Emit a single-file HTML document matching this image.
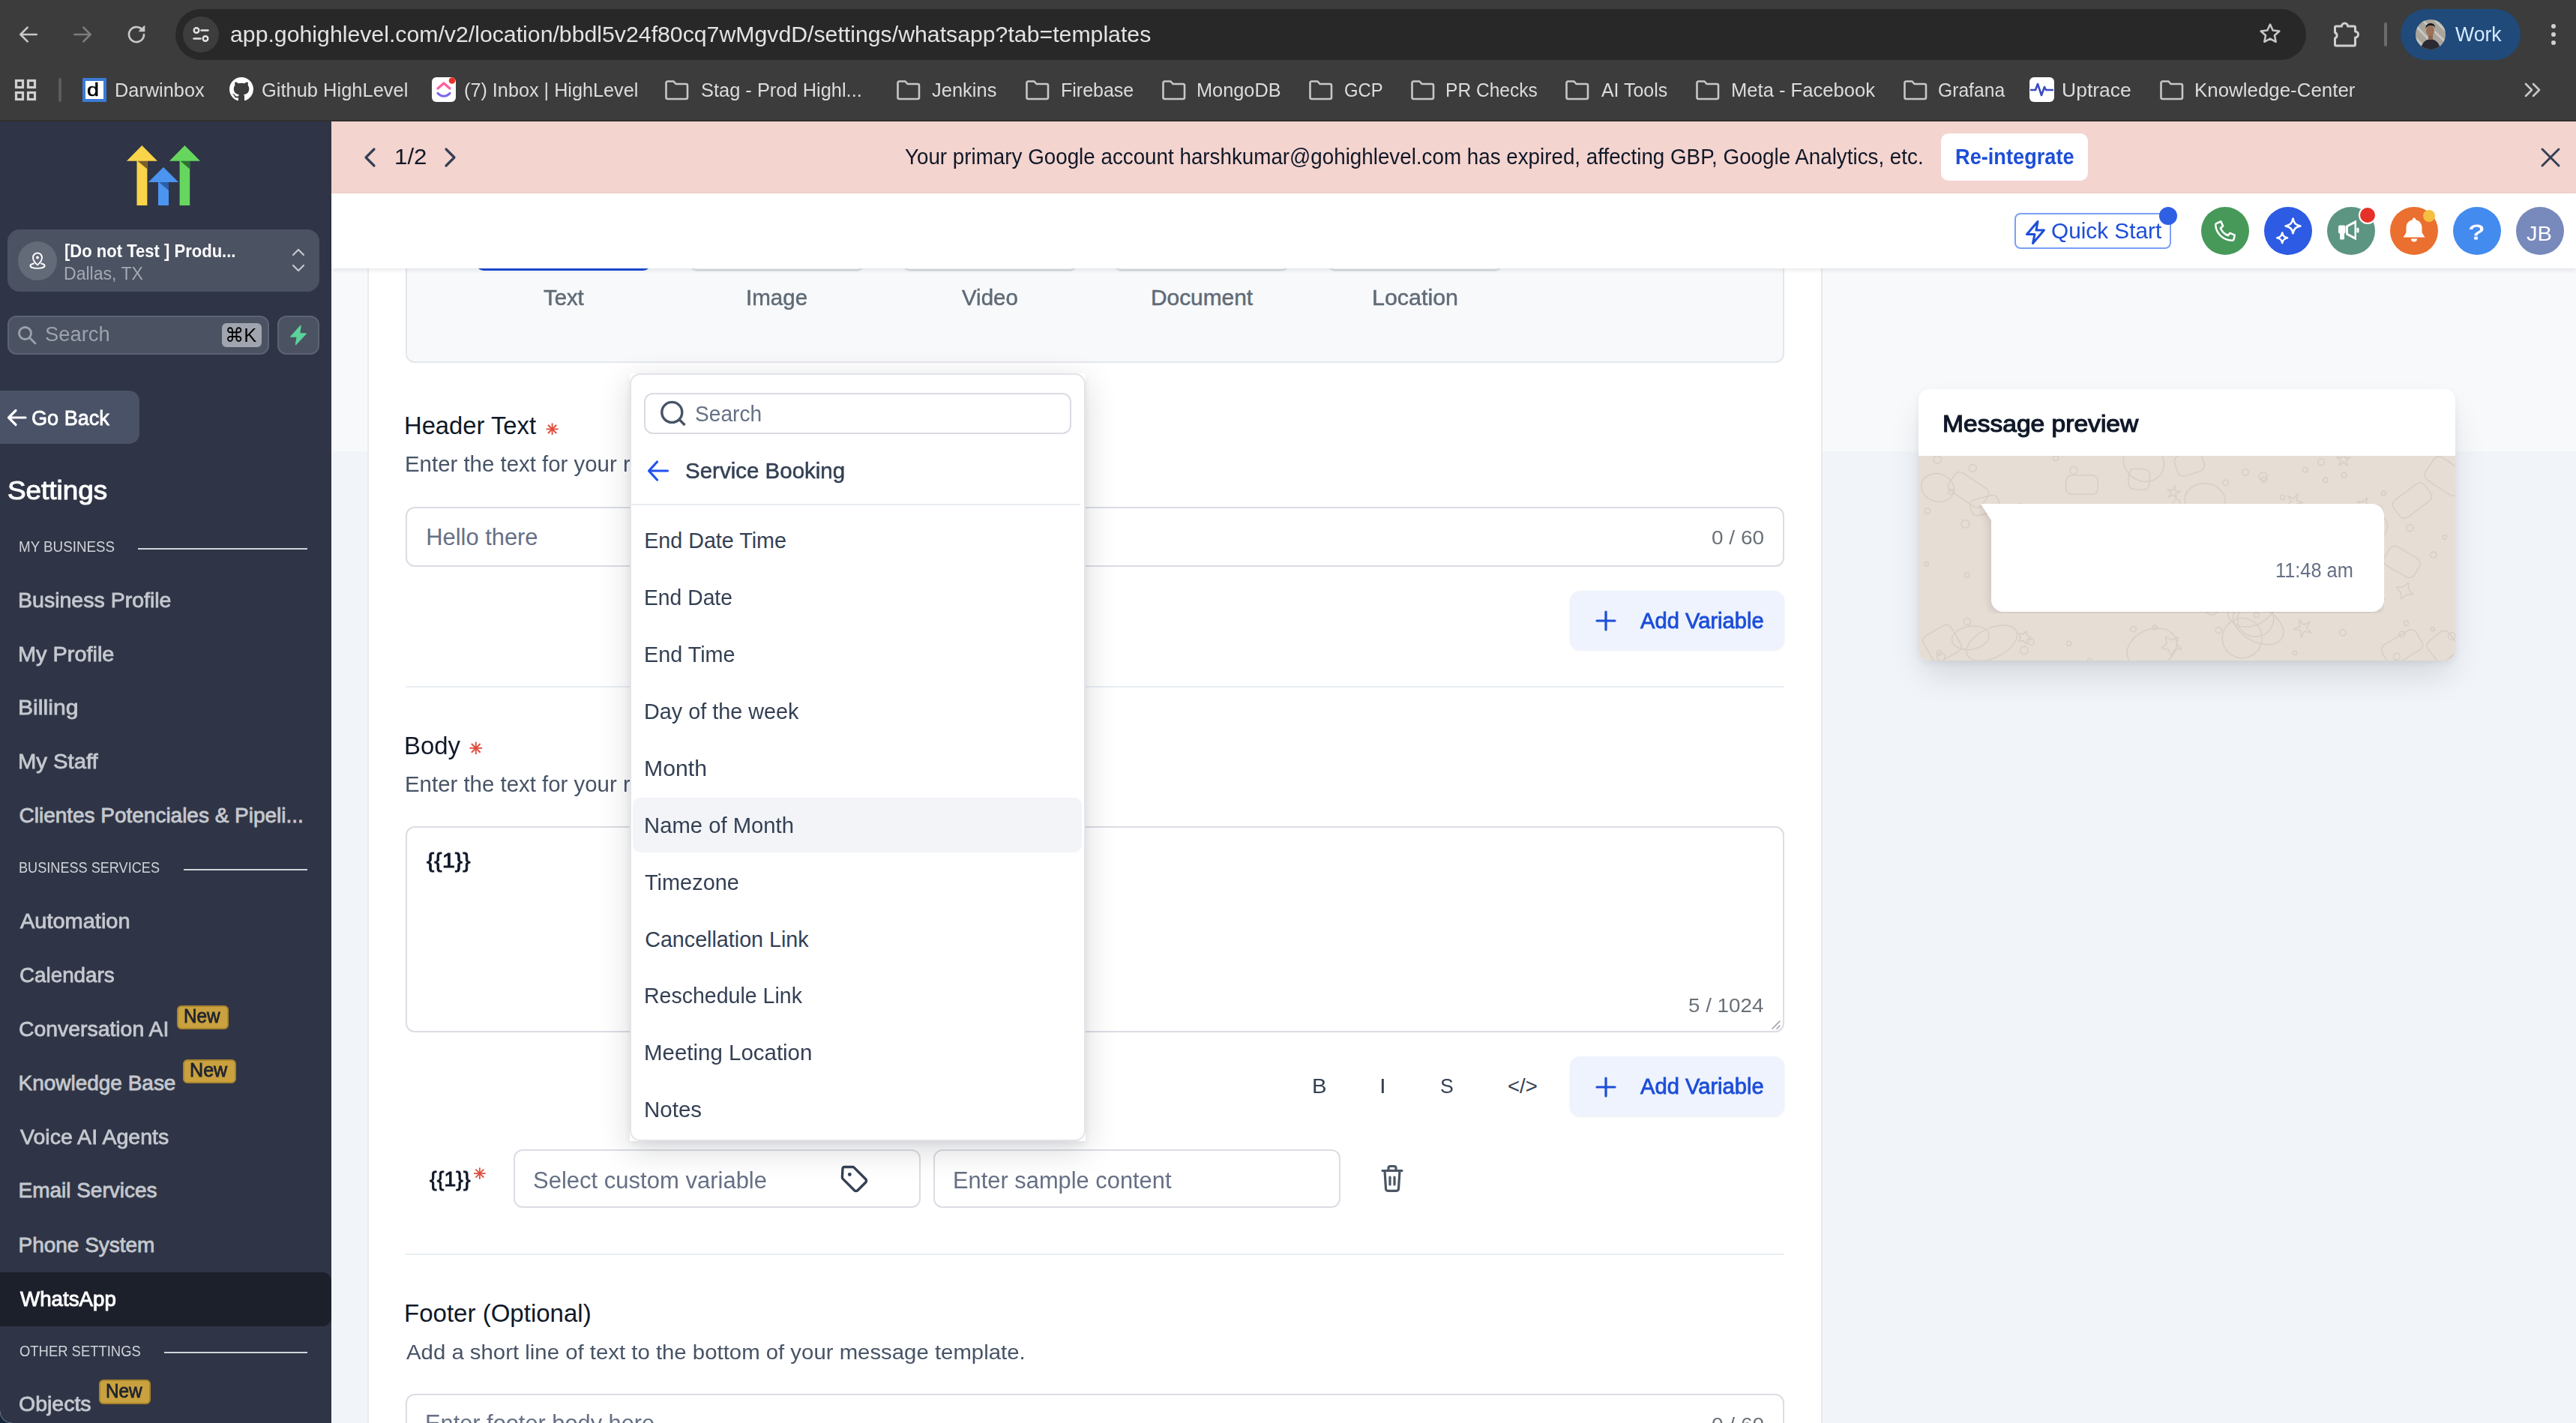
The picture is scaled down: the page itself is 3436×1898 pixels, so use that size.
<!DOCTYPE html>
<html><head><meta charset="utf-8"><style>
html,body{margin:0;padding:0;width:3436px;height:1898px;overflow:hidden;background:#f1f5f9;font-family:"Liberation Sans",sans-serif;}
</style></head><body>
<div style="position:absolute;left:0px;top:0px;width:3436px;height:161px;background:#3c3c3c"></div>
<div style="position:absolute;left:0px;top:160px;width:3436px;height:2px;background:#303030"></div>
<svg style="position:absolute;left:22px;top:30px;" width="32" height="32" viewBox="0 0 24 24"><path d="M20 12H5M11 5l-7 7 7 7" fill="none" stroke="#c7c7c7" stroke-width="2" stroke-linecap="round" stroke-linejoin="round"/></svg>
<svg style="position:absolute;left:94px;top:30px;" width="32" height="32" viewBox="0 0 24 24"><path d="M4 12h15M13 5l7 7-7 7" fill="none" stroke="#7d7d7d" stroke-width="2" stroke-linecap="round" stroke-linejoin="round"/></svg>
<svg style="position:absolute;left:166px;top:30px;" width="32" height="32" viewBox="0 0 24 24"><path d="M19.5 12a7.5 7.5 0 1 1-2.2-5.3" fill="none" stroke="#c7c7c7" stroke-width="2" stroke-linecap="round"/><path d="M20 3.5v5.2h-5.2z" fill="#c7c7c7" stroke="#c7c7c7" stroke-width="1" stroke-linejoin="round"/></svg>
<div style="position:absolute;left:234px;top:12px;width:2842px;height:68px;background:#282828;border-radius:34px"></div>
<div style="position:absolute;left:244px;top:22px;width:48px;height:48px;background:#3d3d3d;border-radius:50%"></div>
<svg style="position:absolute;left:250px;top:28px;" width="36" height="36" viewBox="0 0 36 36"><circle cx="12" cy="12.5" r="3.3" fill="none" stroke="#e3e3e3" stroke-width="2.4"/><path d="M18.5 12.5h9" stroke="#e3e3e3" stroke-width="2.4" stroke-linecap="round"/><circle cx="24" cy="23.5" r="3.3" fill="none" stroke="#e3e3e3" stroke-width="2.4"/><path d="M8.5 23.5h9" stroke="#e3e3e3" stroke-width="2.4" stroke-linecap="round"/></svg>
<div style="position:absolute;left:306.98px;top:31.05px;font-size:29.710px;line-height:1;font-weight:400;color:#e3e3e3;white-space:pre;transform:scaleX(1.0183);transform-origin:0 0;">app.gohighlevel.com/v2/location/bbdl5v24f80cq7wMgvdD/settings/whatsapp?tab=templates</div>
<svg style="position:absolute;left:3010px;top:28px;" width="36" height="34" viewBox="0 0 24 24"><path d="M12 3.2l2.6 5.6 6.1.7-4.5 4.1 1.2 6-5.4-3-5.4 3 1.2-6-4.5-4.1 6.1-.7z" fill="none" stroke="#c7c7c7" stroke-width="1.8" stroke-linejoin="round"/></svg>
<svg style="position:absolute;left:3110px;top:26px;" width="40" height="38" viewBox="0 0 40 38"><path d="M6 9h7.5a4 4 0 0 1 8 0H30a1.5 1.5 0 0 1 1.5 1.5V16a4 4 0 0 1 0 8v9.5A1.5 1.5 0 0 1 30 35H6a1.5 1.5 0 0 1-1.5-1.5V25a4 4 0 0 0 0-7.5V10.5A1.5 1.5 0 0 1 6 9z" fill="none" stroke="#cfcfcf" stroke-width="3" stroke-linejoin="round"/></svg>
<div style="position:absolute;left:3180.3px;top:30px;width:3.5px;height:31.5px;background:#6b6b6b;border-radius:2px"></div>
<div style="position:absolute;left:3202px;top:12px;width:160px;height:68px;background:#1f4a7a;border-radius:34px"></div>
<svg style="position:absolute;left:3222px;top:26px;" width="40" height="40" viewBox="0 0 40 40"><defs><clipPath id="av"><circle cx="20" cy="20" r="20"/></clipPath></defs><g clip-path="url(#av)"><rect width="40" height="40" fill="#a9a59c"/><path d="M0 8L30 40M8 0L40 30M-5 20L20 45M20 -5L45 20" stroke="#d9d6cf" stroke-width="3" opacity=".7"/><path d="M7 40c1-9 6-13 13-14 7 1 12 5 13 14z" fill="#2b2a33"/><rect x="17" y="20" width="6" height="7" fill="#8a6450"/><ellipse cx="19.5" cy="15" rx="5.5" ry="7" fill="#9b7158"/><path d="M13.5 12c0-5 3-7 6.5-7s6 2 6 6c-1-2-3-3-6-3s-5 1.5-6.5 4z" fill="#1b1a1f"/></g></svg>
<div style="position:absolute;left:3275.40px;top:32.25px;font-size:27.826px;line-height:1;font-weight:400;color:#d6e9ff;white-space:pre;transform:scaleX(0.9578);transform-origin:0 0;">Work</div>
<div style="position:absolute;left:3402.6px;top:31.499999999999996px;width:6.599999999999909px;height:6.599999999999998px;background:#d0d0d0;border-radius:50%"></div>
<div style="position:absolute;left:3402.6px;top:42.6px;width:6.599999999999909px;height:6.599999999999994px;background:#d0d0d0;border-radius:50%"></div>
<div style="position:absolute;left:3402.6px;top:53.7px;width:6.599999999999909px;height:6.599999999999994px;background:#d0d0d0;border-radius:50%"></div>
<svg style="position:absolute;left:18px;top:104px;" width="32" height="32" viewBox="0 0 32 32"><g fill="none" stroke="#d0d0d0" stroke-width="3.2"><rect x="3.5" y="3.5" width="9" height="9"/><rect x="19.5" y="3.5" width="9" height="9"/><rect x="3.5" y="19.5" width="9" height="9"/><rect x="19.5" y="19.5" width="9" height="9"/></g></svg>
<div style="position:absolute;left:78.2px;top:104px;width:3.5999999999999943px;height:32px;background:#5c5c5c;border-radius:2px"></div>
<div style="position:absolute;left:110px;top:104px;width:32px;height:32px;background:#fff;border:4px solid #3a7bd5;box-sizing:border-box;border-radius:1px"></div>
<div style="position:absolute;left:116.33px;top:108.06px;font-size:24.638px;line-height:1;font-weight:400;color:#000;white-space:pre;transform:scaleX(1.1667);transform-origin:0 0;-webkit-text-stroke:0.6px #000">d</div>
<div style="position:absolute;left:152.63px;top:107.57px;font-size:25.797px;line-height:1;font-weight:400;color:#dcdcdc;white-space:pre;transform:scaleX(0.9825);transform-origin:0 0;">Darwinbox</div>
<svg style="position:absolute;left:306px;top:103px;" width="32" height="32" viewBox="0 0 16 16"><path fill="#fff" d="M8 0C3.58 0 0 3.58 0 8c0 3.54 2.29 6.53 5.47 7.59.4.07.55-.17.55-.38 0-.19-.01-.82-.01-1.49-2.01.37-2.53-.49-2.69-.94-.09-.23-.48-.94-.82-1.13-.28-.15-.68-.52-.01-.53.63-.01 1.08.58 1.23.82.72 1.21 1.87.87 2.33.66.07-.52.28-.87.51-1.07-1.78-.2-3.64-.89-3.64-3.95 0-.87.31-1.59.82-2.15-.08-.2-.36-1.02.08-2.12 0 0 .67-.21 2.2.82.64-.18 1.32-.27 2-.27.68 0 1.36.09 2 .27 1.53-1.04 2.2-.82 2.2-.82.44 1.1.16 1.92.08 2.12.51.56.82 1.27.82 2.15 0 3.07-1.87 3.75-3.65 3.95.29.25.54.73.54 1.48 0 1.07-.01 1.93-.01 2.2 0 .21.15.46.55.38A8.013 8.013 0 0016 8c0-4.42-3.58-8-8-8z"/></svg>
<div style="position:absolute;left:349.01px;top:107.57px;font-size:25.797px;line-height:1;font-weight:400;color:#dcdcdc;white-space:pre;transform:scaleX(0.9877);transform-origin:0 0;">Github HighLevel</div>
<div style="position:absolute;left:576px;top:103px;width:32px;height:33px;background:#fff;border-radius:6px"></div>
<svg style="position:absolute;left:576px;top:103px;" width="32" height="33" viewBox="0 0 32 33"><path d="M8 15l8-7 8 7" fill="none" stroke="#ff5f9e" stroke-width="3.2" stroke-linecap="round" stroke-linejoin="round"/><path d="M8 21.5c4.5 5 11.5 5 16 0" fill="none" stroke="#7b68ee" stroke-width="3.2" stroke-linecap="round"/><circle cx="27" cy="4.5" r="4.3" fill="#e5332a"/></svg>
<div style="position:absolute;left:619.04px;top:107.57px;font-size:25.797px;line-height:1;font-weight:400;color:#dcdcdc;white-space:pre;transform:scaleX(0.9786);transform-origin:0 0;">(7) Inbox | HighLevel</div>
<svg style="position:absolute;left:886px;top:104px;" width="34" height="32" viewBox="0 0 34 32"><path d="M2.5 6.5a2 2 0 0 1 2-2h8l3 3.5h13.5a2 2 0 0 1 2 2v16a2 2 0 0 1-2 2h-24.5a2 2 0 0 1-2-2z" fill="none" stroke="#c7c7c7" stroke-width="2.6" stroke-linejoin="round"/></svg>
<div style="position:absolute;left:935.01px;top:107.57px;font-size:25.797px;line-height:1;font-weight:400;color:#dcdcdc;white-space:pre;transform:scaleX(0.9860);transform-origin:0 0;">Stag - Prod Highl...</div>
<svg style="position:absolute;left:1195px;top:104px;" width="34" height="32" viewBox="0 0 34 32"><path d="M2.5 6.5a2 2 0 0 1 2-2h8l3 3.5h13.5a2 2 0 0 1 2 2v16a2 2 0 0 1-2 2h-24.5a2 2 0 0 1-2-2z" fill="none" stroke="#c7c7c7" stroke-width="2.6" stroke-linejoin="round"/></svg>
<div style="position:absolute;left:1243.01px;top:107.57px;font-size:25.797px;line-height:1;font-weight:400;color:#dcdcdc;white-space:pre;transform:scaleX(0.9884);transform-origin:0 0;">Jenkins</div>
<svg style="position:absolute;left:1367px;top:104px;" width="34" height="32" viewBox="0 0 34 32"><path d="M2.5 6.5a2 2 0 0 1 2-2h8l3 3.5h13.5a2 2 0 0 1 2 2v16a2 2 0 0 1-2 2h-24.5a2 2 0 0 1-2-2z" fill="none" stroke="#c7c7c7" stroke-width="2.6" stroke-linejoin="round"/></svg>
<div style="position:absolute;left:1415.06px;top:107.57px;font-size:25.797px;line-height:1;font-weight:400;color:#dcdcdc;white-space:pre;transform:scaleX(0.9691);transform-origin:0 0;">Firebase</div>
<svg style="position:absolute;left:1549px;top:104px;" width="34" height="32" viewBox="0 0 34 32"><path d="M2.5 6.5a2 2 0 0 1 2-2h8l3 3.5h13.5a2 2 0 0 1 2 2v16a2 2 0 0 1-2 2h-24.5a2 2 0 0 1-2-2z" fill="none" stroke="#c7c7c7" stroke-width="2.6" stroke-linejoin="round"/></svg>
<div style="position:absolute;left:1596.04px;top:107.57px;font-size:25.797px;line-height:1;font-weight:400;color:#dcdcdc;white-space:pre;transform:scaleX(0.9821);transform-origin:0 0;">MongoDB</div>
<svg style="position:absolute;left:1745px;top:104px;" width="34" height="32" viewBox="0 0 34 32"><path d="M2.5 6.5a2 2 0 0 1 2-2h8l3 3.5h13.5a2 2 0 0 1 2 2v16a2 2 0 0 1-2 2h-24.5a2 2 0 0 1-2-2z" fill="none" stroke="#c7c7c7" stroke-width="2.6" stroke-linejoin="round"/></svg>
<div style="position:absolute;left:1793.07px;top:107.57px;font-size:25.797px;line-height:1;font-weight:400;color:#dcdcdc;white-space:pre;transform:scaleX(0.9259);transform-origin:0 0;">GCP</div>
<svg style="position:absolute;left:1881px;top:104px;" width="34" height="32" viewBox="0 0 34 32"><path d="M2.5 6.5a2 2 0 0 1 2-2h8l3 3.5h13.5a2 2 0 0 1 2 2v16a2 2 0 0 1-2 2h-24.5a2 2 0 0 1-2-2z" fill="none" stroke="#c7c7c7" stroke-width="2.6" stroke-linejoin="round"/></svg>
<div style="position:absolute;left:1928.10px;top:107.57px;font-size:25.797px;line-height:1;font-weight:400;color:#dcdcdc;white-space:pre;transform:scaleX(0.9524);transform-origin:0 0;">PR Checks</div>
<svg style="position:absolute;left:2087px;top:104px;" width="34" height="32" viewBox="0 0 34 32"><path d="M2.5 6.5a2 2 0 0 1 2-2h8l3 3.5h13.5a2 2 0 0 1 2 2v16a2 2 0 0 1-2 2h-24.5a2 2 0 0 1-2-2z" fill="none" stroke="#c7c7c7" stroke-width="2.6" stroke-linejoin="round"/></svg>
<div style="position:absolute;left:2136.00px;top:107.57px;font-size:25.797px;line-height:1;font-weight:400;color:#dcdcdc;white-space:pre;transform:scaleX(0.9667);transform-origin:0 0;">AI Tools</div>
<svg style="position:absolute;left:2261px;top:104px;" width="34" height="32" viewBox="0 0 34 32"><path d="M2.5 6.5a2 2 0 0 1 2-2h8l3 3.5h13.5a2 2 0 0 1 2 2v16a2 2 0 0 1-2 2h-24.5a2 2 0 0 1-2-2z" fill="none" stroke="#c7c7c7" stroke-width="2.6" stroke-linejoin="round"/></svg>
<div style="position:absolute;left:2308.52px;top:107.57px;font-size:25.797px;line-height:1;font-weight:400;color:#dcdcdc;white-space:pre;transform:scaleX(0.9921);transform-origin:0 0;">Meta - Facebook</div>
<svg style="position:absolute;left:2538px;top:104px;" width="34" height="32" viewBox="0 0 34 32"><path d="M2.5 6.5a2 2 0 0 1 2-2h8l3 3.5h13.5a2 2 0 0 1 2 2v16a2 2 0 0 1-2 2h-24.5a2 2 0 0 1-2-2z" fill="none" stroke="#c7c7c7" stroke-width="2.6" stroke-linejoin="round"/></svg>
<div style="position:absolute;left:2585.04px;top:107.57px;font-size:25.797px;line-height:1;font-weight:400;color:#dcdcdc;white-space:pre;transform:scaleX(0.9565);transform-origin:0 0;">Grafana</div>
<div style="position:absolute;left:2707px;top:103px;width:33px;height:33px;background:#fff;border-radius:6px"></div>
<svg style="position:absolute;left:2707px;top:103px;" width="33" height="33" viewBox="0 0 33 33"><path d="M1 17h7l3-8 5 15 4-11 2 4h10" fill="none" stroke="#3b4bc4" stroke-width="2.6" stroke-linejoin="round"/></svg>
<div style="position:absolute;left:2749.94px;top:107.57px;font-size:25.797px;line-height:1;font-weight:400;color:#dcdcdc;white-space:pre;transform:scaleX(1.0287);transform-origin:0 0;">Uptrace</div>
<svg style="position:absolute;left:2880px;top:104px;" width="34" height="32" viewBox="0 0 34 32"><path d="M2.5 6.5a2 2 0 0 1 2-2h8l3 3.5h13.5a2 2 0 0 1 2 2v16a2 2 0 0 1-2 2h-24.5a2 2 0 0 1-2-2z" fill="none" stroke="#c7c7c7" stroke-width="2.6" stroke-linejoin="round"/></svg>
<div style="position:absolute;left:2926.59px;top:107.57px;font-size:25.797px;line-height:1;font-weight:400;color:#dcdcdc;white-space:pre;transform:scaleX(1.0043);transform-origin:0 0;">Knowledge-Center</div>
<svg style="position:absolute;left:3364px;top:108px;" width="28" height="24" viewBox="0 0 28 24"><path d="M5 4l8 8-8 8M15 4l8 8-8 8" fill="none" stroke="#c7c7c7" stroke-width="2.6" stroke-linecap="round" stroke-linejoin="round"/></svg>
<div style="position:absolute;left:0px;top:162px;width:442px;height:1736px;background:#2f3546"></div>
<svg style="position:absolute;left:160px;top:185px;" width="120" height="95" viewBox="160 185 120 95">
<path d="M189.4 193.9 L209.9 214.8 L196.4 214.8 L196.4 273.9 L182.5 273.9 L182.5 214.8 L168.9 214.8 Z" fill="#f9d34a"/>
<path d="M183.5 214.8 L196.4 214.8 L196.4 225.6 Z" fill="#7c5e2a"/>
<path d="M218 222.9 L238.1 243 L225 243 L225 273.9 L211 273.9 L211 243 L197.9 243 Z" fill="#4b94ef"/>
<path d="M212 243 L225 243 L225 254 Z" fill="#2e5ea5"/>
<path d="M246.4 193.9 L267 214.8 L253.2 214.8 L253.2 273.9 L239.6 273.9 L239.6 214.8 L226 214.8 Z" fill="#66d65f"/>
<path d="M240.6 214.8 L253.2 214.8 L253.2 225.6 Z" fill="#2e6f31"/>
</svg>
<div style="position:absolute;left:10px;top:306px;width:416px;height:83px;background:#4b5262;border-radius:16px"></div>
<div style="position:absolute;left:24px;top:322px;width:52px;height:52px;background:#636a78;border-radius:50%"></div>
<svg style="position:absolute;left:36px;top:334px;" width="28" height="28" viewBox="0 0 28 28"><path d="M14 19.5s-6-5.2-6-10a6 6 0 0 1 12 0c0 4.8-6 10-6 10z" fill="none" stroke="#fff" stroke-width="1.9" stroke-linejoin="round"/><circle cx="14" cy="9.5" r="1.9" fill="#fff"/><path d="M9 17.5c-3 .6-4.6 1.7-4.6 3 0 2 4.3 3.4 9.6 3.4s9.6-1.4 9.6-3.4c0-1.3-1.6-2.4-4.6-3" fill="none" stroke="#fff" stroke-width="1.9" stroke-linecap="round"/></svg>
<div style="position:absolute;left:86.09px;top:323.30px;font-size:24.348px;line-height:1;font-weight:700;color:#ffffff;white-space:pre;transform:scaleX(0.9056);transform-origin:0 0;">[Do not Test ] Produ...</div>
<div style="position:absolute;left:85.13px;top:353.06px;font-size:24.638px;line-height:1;font-weight:400;color:#a5a9b3;white-space:pre;transform:scaleX(0.9369);transform-origin:0 0;">Dallas, TX</div>
<svg style="position:absolute;left:386px;top:330px;" width="24" height="34" viewBox="0 0 24 34"><path d="M5 10l7-7 7 7M5 24l7 7 7-7" fill="none" stroke="#c5c8cf" stroke-width="2.2" stroke-linecap="round" stroke-linejoin="round"/></svg>
<div style="position:absolute;left:10px;top:421px;width:349px;height:52px;background:#4b5262;border:2px solid #5c6373;box-sizing:border-box;border-radius:12px"></div>
<svg style="position:absolute;left:21px;top:432px;" width="30" height="30" viewBox="0 0 30 30"><circle cx="12.5" cy="12.5" r="8" fill="none" stroke="#9da2ad" stroke-width="2.8"/><path d="M18.5 18.5l7.5 7.5" stroke="#9da2ad" stroke-width="2.8" stroke-linecap="round"/></svg>
<div style="position:absolute;left:60.04px;top:431.36px;font-size:28.406px;line-height:1;font-weight:400;color:#9da2ad;white-space:pre;transform:scaleX(0.9632);transform-origin:0 0;">Search</div>
<div style="position:absolute;left:296px;top:431px;width:53px;height:32px;background:#a0a4ae;border-radius:6px"></div>
<div style="position:absolute;left:300.07px;top:433.83px;font-size:26.087px;line-height:1;font-weight:400;color:#000;white-space:pre;transform:scaleX(0.9750);transform-origin:0 0;">⌘K</div>
<div style="position:absolute;left:370px;top:421px;width:56px;height:52px;background:#4b5262;border:2px solid #5c6373;box-sizing:border-box;border-radius:12px"></div>
<svg style="position:absolute;left:385px;top:433px;" width="26" height="28" viewBox="0 0 26 28"><path d="M16 1.5L3 16h8.5l-2 10.5L23 12h-8.5z" fill="#5ad39a" stroke="#5ad39a" stroke-width="1.5" stroke-linejoin="round"/></svg>
<div style="position:absolute;left:0px;top:521px;width:186px;height:71px;background:#495266;border-radius:0 14px 14px 0"></div>
<svg style="position:absolute;left:8px;top:544px;" width="28" height="26" viewBox="0 0 28 26"><path d="M26 13H4M13 3.5L3.5 13 13 22.5" fill="none" stroke="#fff" stroke-width="3.2" stroke-linecap="round" stroke-linejoin="round"/></svg>
<div style="position:absolute;left:42.05px;top:542.86px;font-size:28.406px;line-height:1;font-weight:400;color:#ffffff;white-space:pre;transform:scaleX(0.9537);transform-origin:0 0;-webkit-text-stroke:0.8px currentColor;">Go Back</div>
<div style="position:absolute;left:9.53px;top:636.68px;font-size:34.493px;line-height:1;font-weight:400;color:#ffffff;white-space:pre;transform:scaleX(1.0683);transform-origin:0 0;-webkit-text-stroke:1.0px currentColor;">Settings</div>
<div style="position:absolute;left:24.70px;top:719.26px;font-size:20.870px;line-height:1;font-weight:400;color:#d0d3d9;white-space:pre;transform:scaleX(0.9007);transform-origin:0 0;">MY BUSINESS</div>
<div style="position:absolute;left:184px;top:731px;width:226px;height:2px;background:#d0d3d9"></div>
<div style="position:absolute;left:24.46px;top:786.82px;font-size:27.971px;line-height:1;font-weight:400;color:#c5c8cf;white-space:pre;transform:scaleX(1.0197);transform-origin:0 0;-webkit-text-stroke:0.8px currentColor;">Business Profile</div>
<div style="position:absolute;left:24.43px;top:858.82px;font-size:27.971px;line-height:1;font-weight:400;color:#c5c8cf;white-space:pre;transform:scaleX(1.0328);transform-origin:0 0;-webkit-text-stroke:0.8px currentColor;">My Profile</div>
<div style="position:absolute;left:24.35px;top:929.82px;font-size:27.971px;line-height:1;font-weight:400;color:#c5c8cf;white-space:pre;transform:scaleX(1.0775);transform-origin:0 0;-webkit-text-stroke:0.8px currentColor;">Billing</div>
<div style="position:absolute;left:24.41px;top:1002.32px;font-size:27.971px;line-height:1;font-weight:400;color:#c5c8cf;white-space:pre;transform:scaleX(1.0446);transform-origin:0 0;-webkit-text-stroke:0.8px currentColor;">My Staff</div>
<div style="position:absolute;left:25.50px;top:1074.42px;font-size:27.971px;line-height:1;font-weight:400;color:#c5c8cf;white-space:pre;-webkit-text-stroke:0.8px currentColor;">Clientes Potenciales &amp; Pipeli...</div>
<div style="position:absolute;left:24.76px;top:1146.96px;font-size:20.870px;line-height:1;font-weight:400;color:#d0d3d9;white-space:pre;transform:scaleX(0.8687);transform-origin:0 0;">BUSINESS SERVICES</div>
<div style="position:absolute;left:245px;top:1159px;width:165px;height:2px;background:#d0d3d9"></div>
<div style="position:absolute;left:26.50px;top:1214.82px;font-size:27.971px;line-height:1;font-weight:400;color:#c5c8cf;white-space:pre;transform:scaleX(1.0357);transform-origin:0 0;-webkit-text-stroke:0.8px currentColor;">Automation</div>
<div style="position:absolute;left:25.51px;top:1286.82px;font-size:27.971px;line-height:1;font-weight:400;color:#c5c8cf;white-space:pre;transform:scaleX(0.9937);transform-origin:0 0;-webkit-text-stroke:0.8px currentColor;">Calendars</div>
<div style="position:absolute;left:25.49px;top:1358.82px;font-size:27.971px;line-height:1;font-weight:400;color:#c5c8cf;white-space:pre;transform:scaleX(1.0144);transform-origin:0 0;-webkit-text-stroke:0.8px currentColor;">Conversation AI</div>
<div style="position:absolute;left:24.50px;top:1430.82px;font-size:27.971px;line-height:1;font-weight:400;color:#c5c8cf;white-space:pre;-webkit-text-stroke:0.8px currentColor;">Knowledge Base</div>
<div style="position:absolute;left:26.50px;top:1502.82px;font-size:27.971px;line-height:1;font-weight:400;color:#c5c8cf;white-space:pre;transform:scaleX(1.0196);transform-origin:0 0;-webkit-text-stroke:0.8px currentColor;">Voice AI Agents</div>
<div style="position:absolute;left:24.51px;top:1574.32px;font-size:27.971px;line-height:1;font-weight:400;color:#c5c8cf;white-space:pre;-webkit-text-stroke:0.8px currentColor;">Email Services</div>
<div style="position:absolute;left:24.50px;top:1646.82px;font-size:27.971px;line-height:1;font-weight:400;color:#c5c8cf;white-space:pre;-webkit-text-stroke:0.8px currentColor;">Phone System</div>
<div style="position:absolute;left:236px;top:1341px;width:69px;height:32px;background:#c9a13e;border:2px solid #a8842e;box-sizing:border-box;border-radius:6px"></div>
<div style="position:absolute;left:245.08px;top:1342.94px;font-size:25.362px;line-height:1;font-weight:400;color:#1f2430;white-space:pre;transform:scaleX(0.9592);transform-origin:0 0;-webkit-text-stroke:0.8px currentColor;">New</div>
<div style="position:absolute;left:244px;top:1412.5px;width:70.5px;height:32.5px;background:#c9a13e;border:2px solid #a8842e;box-sizing:border-box;border-radius:6px"></div>
<div style="position:absolute;left:253.02px;top:1414.94px;font-size:25.362px;line-height:1;font-weight:400;color:#1f2430;white-space:pre;transform:scaleX(0.9898);transform-origin:0 0;-webkit-text-stroke:0.8px currentColor;">New</div>
<div style="position:absolute;left:0px;top:1697px;width:442px;height:72px;background:#1c202b;border-radius:0 12px 12px 0"></div>
<div style="position:absolute;left:26.50px;top:1717.98px;font-size:28.261px;line-height:1;font-weight:400;color:#ffffff;white-space:pre;transform:scaleX(0.9808);transform-origin:0 0;-webkit-text-stroke:1.0px currentColor;">WhatsApp</div>
<div style="position:absolute;left:25.62px;top:1792.26px;font-size:20.870px;line-height:1;font-weight:400;color:#d0d3d9;white-space:pre;transform:scaleX(0.8834);transform-origin:0 0;">OTHER SETTINGS</div>
<div style="position:absolute;left:219px;top:1803px;width:191px;height:2px;background:#d0d3d9"></div>
<div style="position:absolute;left:25.48px;top:1858.62px;font-size:27.971px;line-height:1;font-weight:400;color:#c5c8cf;white-space:pre;transform:scaleX(1.0183);transform-origin:0 0;-webkit-text-stroke:0.8px currentColor;">Objects</div>
<div style="position:absolute;left:132px;top:1840px;width:69px;height:33px;background:#c9a13e;border:2px solid #a8842e;box-sizing:border-box;border-radius:6px"></div>
<div style="position:absolute;left:141.08px;top:1842.94px;font-size:25.362px;line-height:1;font-weight:400;color:#1f2430;white-space:pre;transform:scaleX(0.9592);transform-origin:0 0;-webkit-text-stroke:0.8px currentColor;">New</div>
<div style="position:absolute;left:442px;top:162px;width:2994px;height:440px;background:#f8f9fb"></div>
<div style="position:absolute;left:442px;top:602px;width:2994px;height:1296px;background:#f1f4f8"></div>
<div style="position:absolute;left:490px;top:300px;width:1941px;height:1598px;background:#fff;border-left:2px solid #e9ebef;border-right:2px solid #e6e9ee;box-sizing:border-box"></div>
<div style="position:absolute;left:541px;top:200px;width:1839px;height:284px;background:#f8f9fb;border:2px solid #e4e7ec;box-sizing:border-box;border-radius:12px"></div>
<div style="position:absolute;left:635px;top:300px;width:233px;height:61px;background:#fff;border-bottom:3px solid #1d4ed8;box-sizing:border-box;border-radius:0 0 10px 10px"></div>
<div style="position:absolute;left:920px;top:300px;width:233px;height:61px;background:#fff;border-bottom:2px solid #d5d9e0;box-sizing:border-box;border-radius:0 0 10px 10px;box-shadow:0 1px 2px rgba(0,0,0,.08)"></div>
<div style="position:absolute;left:1204px;top:300px;width:233px;height:61px;background:#fff;border-bottom:2px solid #d5d9e0;box-sizing:border-box;border-radius:0 0 10px 10px;box-shadow:0 1px 2px rgba(0,0,0,.08)"></div>
<div style="position:absolute;left:1486px;top:300px;width:233px;height:61px;background:#fff;border-bottom:2px solid #d5d9e0;box-sizing:border-box;border-radius:0 0 10px 10px;box-shadow:0 1px 2px rgba(0,0,0,.08)"></div>
<div style="position:absolute;left:1771px;top:300px;width:233px;height:61px;background:#fff;border-bottom:2px solid #d5d9e0;box-sizing:border-box;border-radius:0 0 10px 10px;box-shadow:0 1px 2px rgba(0,0,0,.08)"></div>
<div style="position:absolute;left:725.00px;top:382.12px;font-size:29.855px;line-height:1;font-weight:400;color:#5f6b76;white-space:pre;transform:scaleX(0.9818);transform-origin:0 0;-webkit-text-stroke:0.5px currentColor;">Text</div>
<div style="position:absolute;left:994.52px;top:382.12px;font-size:29.855px;line-height:1;font-weight:400;color:#5f6b76;white-space:pre;transform:scaleX(0.9900);transform-origin:0 0;-webkit-text-stroke:0.5px currentColor;">Image</div>
<div style="position:absolute;left:1283.00px;top:382.12px;font-size:29.855px;line-height:1;font-weight:400;color:#5f6b76;white-space:pre;transform:scaleX(0.9867);transform-origin:0 0;-webkit-text-stroke:0.5px currentColor;">Video</div>
<div style="position:absolute;left:1535.00px;top:382.12px;font-size:29.855px;line-height:1;font-weight:400;color:#5f6b76;white-space:pre;-webkit-text-stroke:0.5px currentColor;">Document</div>
<div style="position:absolute;left:1830.36px;top:382.12px;font-size:29.855px;line-height:1;font-weight:400;color:#5f6b76;white-space:pre;transform:scaleX(1.0193);transform-origin:0 0;-webkit-text-stroke:0.5px currentColor;">Location</div>
<div style="position:absolute;left:539.01px;top:552.16px;font-size:32.754px;line-height:1;font-weight:400;color:#101828;white-space:pre;">Header Text</div>
<svg style="position:absolute;left:727.5px;top:563.6px;" width="17.200000000000045" height="16.799999999999955" viewBox="0 0 20 20"><g stroke="#e04b3c" stroke-width="2.2" stroke-linecap="butt"><path d="M10 0.5v19"/><path d="M0.5 10h19"/><path d="M3.3 3.3l13.4 13.4"/><path d="M16.7 3.3L3.3 16.7"/></g></svg>
<div style="position:absolute;left:539.95px;top:605.31px;font-size:28.696px;line-height:1;font-weight:400;color:#475467;white-space:pre;transform:scaleX(1.0250);transform-origin:0 0;">Enter the text for your recipients header</div>
<div style="position:absolute;left:541px;top:676px;width:1839px;height:80px;background:#fff;border:2px solid #dcdde4;box-sizing:border-box;border-radius:12px"></div>
<div style="position:absolute;left:568.30px;top:701.76px;font-size:30.870px;line-height:1;font-weight:400;color:#667085;white-space:pre;">Hello there</div>
<div style="position:absolute;left:2283.33px;top:704.43px;font-size:26.087px;line-height:1;font-weight:400;color:#697078;white-space:pre;transform:scaleX(1.0730);transform-origin:0 0;">0 / 60</div>
<div style="position:absolute;left:2094px;top:788px;width:286px;height:79px;background:#eef3fe;border-radius:14px;box-shadow:0 1px 3px rgba(16,24,40,.07)"></div>
<svg style="position:absolute;left:2127px;top:813px;" width="30" height="30" viewBox="0 0 30 30"><path d="M15 3v24M3 15h24" stroke="#1d4ed8" stroke-width="3.2" stroke-linecap="round"/></svg>
<div style="position:absolute;left:2187.50px;top:813.61px;font-size:28.696px;line-height:1;font-weight:400;color:#1d4ed8;white-space:pre;transform:scaleX(1.0154);transform-origin:0 0;-webkit-text-stroke:0.8px currentColor;">Add Variable</div>
<div style="position:absolute;left:541px;top:915px;width:1839px;height:2px;background:#e9eef5"></div>
<div style="position:absolute;left:539.01px;top:977.91px;font-size:33.043px;line-height:1;font-weight:400;color:#101828;white-space:pre;transform:scaleX(0.9958);transform-origin:0 0;">Body</div>
<svg style="position:absolute;left:626px;top:989px;" width="17.5" height="17.700000000000045" viewBox="0 0 20 20"><g stroke="#e04b3c" stroke-width="2.2" stroke-linecap="butt"><path d="M10 0.5v19"/><path d="M0.5 10h19"/><path d="M3.3 3.3l13.4 13.4"/><path d="M16.7 3.3L3.3 16.7"/></g></svg>
<div style="position:absolute;left:539.95px;top:1031.81px;font-size:28.696px;line-height:1;font-weight:400;color:#475467;white-space:pre;transform:scaleX(1.0250);transform-origin:0 0;">Enter the text for your recipients message</div>
<div style="position:absolute;left:541px;top:1102px;width:1839px;height:275px;background:#fff;border:2px solid #dcdde4;box-sizing:border-box;border-radius:12px"></div>
<div style="position:absolute;left:568.60px;top:1133.59px;font-size:27.536px;line-height:1;font-weight:400;color:#101828;white-space:pre;transform:scaleX(1.1231);transform-origin:0 0;-webkit-text-stroke:0.8px currentColor;">{{1}}</div>
<div style="position:absolute;left:2251.94px;top:1328.33px;font-size:26.087px;line-height:1;font-weight:400;color:#697078;white-space:pre;transform:scaleX(1.0645);transform-origin:0 0;">5 / 1024</div>
<svg style="position:absolute;left:2358px;top:1356px;" width="18" height="18" viewBox="0 0 18 18"><path d="M16 6L6 16M16 12l-4 4" stroke="#9aa0a8" stroke-width="1.6" stroke-linecap="round"/></svg>
<div style="position:absolute;left:1749.87px;top:1434.99px;font-size:27.536px;line-height:1;font-weight:400;color:#344054;white-space:pre;transform:scaleX(1.0667);transform-origin:0 0;">B</div>
<div style="position:absolute;left:1840.33px;top:1434.99px;font-size:27.536px;line-height:1;font-weight:400;color:#344054;white-space:pre;transform:scaleX(1.1333);transform-origin:0 0;">I</div>
<div style="position:absolute;left:1921.03px;top:1434.99px;font-size:27.536px;line-height:1;font-weight:400;color:#344054;white-space:pre;transform:scaleX(0.9688);transform-origin:0 0;">S</div>
<div style="position:absolute;left:2011.00px;top:1434.99px;font-size:27.536px;line-height:1;font-weight:400;color:#344054;white-space:pre;">&lt;/&gt;</div>
<div style="position:absolute;left:2094px;top:1409px;width:286px;height:80px;background:#eef3fe;border-radius:14px;box-shadow:0 1px 3px rgba(16,24,40,.07)"></div>
<svg style="position:absolute;left:2127px;top:1435px;" width="30" height="30" viewBox="0 0 30 30"><path d="M15 3v24M3 15h24" stroke="#1d4ed8" stroke-width="3.2" stroke-linecap="round"/></svg>
<div style="position:absolute;left:2187.50px;top:1434.51px;font-size:28.696px;line-height:1;font-weight:400;color:#1d4ed8;white-space:pre;transform:scaleX(1.0154);transform-origin:0 0;-webkit-text-stroke:0.8px currentColor;">Add Variable</div>
<div style="position:absolute;left:572.60px;top:1560.21px;font-size:26.812px;line-height:1;font-weight:400;color:#101828;white-space:pre;transform:scaleX(1.0765);transform-origin:0 0;-webkit-text-stroke:0.8px currentColor;">{{1}}</div>
<svg style="position:absolute;left:631px;top:1556.7px;" width="17.700000000000045" height="16.299999999999955" viewBox="0 0 20 20"><g stroke="#e04b3c" stroke-width="2.2" stroke-linecap="butt"><path d="M10 0.5v19"/><path d="M0.5 10h19"/><path d="M3.3 3.3l13.4 13.4"/><path d="M16.7 3.3L3.3 16.7"/></g></svg>
<div style="position:absolute;left:685px;top:1532.8px;width:543px;height:78.70000000000005px;background:#fff;border:2px solid #dcdde4;box-sizing:border-box;border-radius:12px"></div>
<div style="position:absolute;left:711.36px;top:1559.33px;font-size:30.435px;line-height:1;font-weight:400;color:#667085;white-space:pre;transform:scaleX(1.0195);transform-origin:0 0;">Select custom variable</div>
<svg style="position:absolute;left:1119px;top:1552px;" width="42" height="42" viewBox="0 0 42 42"><path d="M5 6.5a2 2 0 0 1 2-2h11.2a3 3 0 0 1 2.1.9l15.4 15.4a3 3 0 0 1 0 4.2l-10.8 10.8a3 3 0 0 1-4.2 0L5.3 20.4a3 3 0 0 1-.9-2.1z" transform="rotate(0)" fill="none" stroke="#344054" stroke-width="3.4" stroke-linejoin="round"/><circle cx="14.3" cy="14.5" r="2.4" fill="#344054"/></svg>
<div style="position:absolute;left:1244.5px;top:1532.8px;width:543.5px;height:78.70000000000005px;background:#fff;border:2px solid #dcdde4;box-sizing:border-box;border-radius:12px"></div>
<div style="position:absolute;left:1270.97px;top:1559.33px;font-size:30.435px;line-height:1;font-weight:400;color:#667085;white-space:pre;transform:scaleX(1.0140);transform-origin:0 0;">Enter sample content</div>
<svg style="position:absolute;left:1838px;top:1552px;" width="38" height="40" viewBox="0 0 38 40"><path d="M6 9.5h26M14 9V6a2.5 2.5 0 0 1 2.5-2.5h5A2.5 2.5 0 0 1 24 6v3M9 9.5l1.5 24a3 3 0 0 0 3 2.8h11a3 3 0 0 0 3-2.8l1.5-24M16 18v10M22 18v10" fill="none" stroke="#4b5563" stroke-width="3.2" stroke-linecap="round" stroke-linejoin="round"/></svg>
<div style="position:absolute;left:541px;top:1672px;width:1839px;height:2px;background:#e9eef5"></div>
<div style="position:absolute;left:539.01px;top:1735.41px;font-size:33.043px;line-height:1;font-weight:400;color:#101828;white-space:pre;">Footer (Optional)</div>
<div style="position:absolute;left:542.00px;top:1788.98px;font-size:28.261px;line-height:1;font-weight:400;color:#475467;white-space:pre;transform:scaleX(1.0391);transform-origin:0 0;">Add a short line of text to the bottom of your message template.</div>
<div style="position:absolute;left:541px;top:1859px;width:1839px;height:101px;background:#fff;border:2px solid #dcdde4;box-sizing:border-box;border-radius:12px"></div>
<div style="position:absolute;left:566.58px;top:1883.13px;font-size:30.435px;line-height:1;font-weight:400;color:#667085;white-space:pre;transform:scaleX(1.0113);transform-origin:0 0;">Enter footer body here</div>
<div style="position:absolute;left:2283.33px;top:1886.83px;font-size:26.087px;line-height:1;font-weight:400;color:#697078;white-space:pre;transform:scaleX(1.0730);transform-origin:0 0;">0 / 60</div>
<div style="position:absolute;left:442px;top:162px;width:2994px;height:96px;background:#f4d4cf"></div>
<svg style="position:absolute;left:484px;top:196px;" width="20" height="28" viewBox="0 0 20 28"><path d="M15 3L4 14l11 11" fill="none" stroke="#344054" stroke-width="3.2" stroke-linecap="round" stroke-linejoin="round"/></svg>
<div style="position:absolute;left:525.89px;top:193.95px;font-size:29.710px;line-height:1;font-weight:400;color:#101828;white-space:pre;transform:scaleX(1.0526);transform-origin:0 0;">1/2</div>
<svg style="position:absolute;left:590px;top:196px;" width="20" height="28" viewBox="0 0 20 28"><path d="M5 3l11 11L5 25" fill="none" stroke="#344054" stroke-width="3.2" stroke-linecap="round" stroke-linejoin="round"/></svg>
<div style="position:absolute;left:1207.46px;top:193.87px;font-size:29.565px;line-height:1;font-weight:400;color:#101828;white-space:pre;transform:scaleX(0.9401);transform-origin:0 0;">Your primary Google account harshkumar@gohighlevel.com has expired, affecting GBP, Google Analytics, etc.</div>
<div style="position:absolute;left:2589px;top:178px;width:196px;height:63px;background:#fff;border-radius:10px"></div>
<div style="position:absolute;left:2608.17px;top:194.25px;font-size:29.710px;line-height:1;font-weight:700;color:#1d4ed8;white-space:pre;transform:scaleX(0.9153);transform-origin:0 0;">Re-integrate</div>
<svg style="position:absolute;left:3386px;top:194px;" width="32" height="32" viewBox="0 0 32 32"><path d="M5 5l22 22M27 5L5 27" stroke="#344054" stroke-width="3" stroke-linecap="round"/></svg>
<div style="position:absolute;left:442px;top:258px;width:2994px;height:100px;background:#fff;box-shadow:0 2px 6px rgba(16,24,40,.10)"></div>
<div style="position:absolute;left:2687px;top:284px;width:209px;height:48px;background:#fff;border:2px solid #7aa0f5;box-sizing:border-box;border-radius:8px"></div>
<svg style="position:absolute;left:2700px;top:293px;" width="30" height="34" viewBox="0 0 30 34"><path d="M18 2.5L3.5 19.5h10.5l-2.5 12 15-17.5H16z" fill="none" stroke="#1d4ed8" stroke-width="3" stroke-linejoin="round"/></svg>
<div style="position:absolute;left:2735.99px;top:293.17px;font-size:29.565px;line-height:1;font-weight:400;color:#1d4ed8;white-space:pre;transform:scaleX(1.0069);transform-origin:0 0;">Quick Start</div>
<div style="position:absolute;left:2880px;top:276px;width:24px;height:24px;background:#2f5fe3;border-radius:50%"></div>
<div style="position:absolute;left:2936px;top:276px;width:64px;height:64px;background:#47995a;border-radius:50%"></div>
<div style="position:absolute;left:3020px;top:276px;width:64px;height:64px;background:#2d5be3;border-radius:50%"></div>
<div style="position:absolute;left:3104px;top:276px;width:64px;height:64px;background:#5c9582;border-radius:50%"></div>
<div style="position:absolute;left:3188px;top:276px;width:64px;height:64px;background:#eb6f2e;border-radius:50%"></div>
<div style="position:absolute;left:3272px;top:276px;width:64px;height:64px;background:#438bee;border-radius:50%"></div>
<div style="position:absolute;left:3356px;top:276px;width:64px;height:64px;background:#7889bb;border-radius:50%"></div>
<svg style="position:absolute;left:2950px;top:290px;" width="36" height="36" viewBox="0 0 24 24"><path d="M8.2 3.5l1.9 4.2-2.2 1.8a12 12 0 0 0 6.6 6.6l1.8-2.2 4.2 1.9-.8 3.6c-.2.7-.8 1.1-1.5 1.1C10 20.2 3.8 14 3.5 6.7c0-.7.4-1.3 1.1-1.5z" fill="none" stroke="#fff" stroke-width="1.7" stroke-linejoin="round"/></svg>
<svg style="position:absolute;left:3030px;top:288px;" width="44" height="42" viewBox="0 0 44 42"><path d="M28.5 3.5c1.3 6.3 3.6 8.6 9.9 9.9-6.3 1.3-8.6 3.6-9.9 9.9-1.3-6.3-3.6-8.6-9.9-9.9 6.3-1.3 8.6-3.6 9.9-9.9z" fill="none" stroke="#fff" stroke-width="2.6" stroke-linejoin="round"/><path d="M14.2 22.5c.9 4.3 2.5 5.9 6.8 6.8-4.3.9-5.9 2.5-6.8 6.8-.9-4.3-2.5-5.9-6.8-6.8 4.3-.9 5.9-2.5 6.8-6.8z" fill="none" stroke="#fff" stroke-width="2.6" stroke-linejoin="round"/></svg>
<svg style="position:absolute;left:3118px;top:292px;" width="34" height="30" viewBox="0 0 34 30"><rect x="1" y="8.5" width="9.5" height="11" rx="2" fill="#fff"/><rect x="3" y="18" width="6" height="9.5" rx="1.5" fill="#fff"/><path d="M11 9l14-7.5v27L11 21z" fill="#fff"/><path d="M14 10.8l8.5-4.6v17.6L14 19.2z" fill="#5c9582"/><rect x="25.5" y="11.5" width="3" height="7" rx="1.5" fill="#fff"/></svg>
<div style="position:absolute;left:3146px;top:274.5px;width:24px;height:24.0px;background:#e5312a;border:2.5px solid #fff;box-sizing:border-box;border-radius:50%"></div>
<svg style="position:absolute;left:3204px;top:289px;" width="32" height="36" viewBox="0 0 32 36"><path d="M16 1.5a2.2 2.2 0 0 1 2.2 2.2v.6c5.2 1 8.3 5.2 8.3 10.4v6.5l4 6.3H1.5l4-6.3v-6.5c0-5.2 3.1-9.4 8.3-10.4v-.6A2.2 2.2 0 0 1 16 1.5z" fill="#fff"/><path d="M12 29.5h8a4 4 0 0 1-8 0z" fill="#fff"/></svg>
<div style="position:absolute;left:3232px;top:280px;width:16px;height:16px;background:#f5bf42;border-radius:50%"></div>
<div style="position:absolute;left:3293.42px;top:294.98px;font-size:28.261px;line-height:1;font-weight:400;color:#ffffff;white-space:pre;transform:scaleX(1.2917);transform-origin:0 0;-webkit-text-stroke:0.8px #fff">?</div>
<div style="position:absolute;left:3370.00px;top:296.98px;font-size:28.261px;line-height:1;font-weight:400;color:#ffffff;white-space:pre;transform:scaleX(1.0312);transform-origin:0 0;">JB</div>
<div style="position:absolute;left:2559px;top:519px;width:716px;height:362px;background:#fff;border-radius:14px;box-shadow:0 24px 48px -8px rgba(16,24,40,.14),0 4px 10px rgba(16,24,40,.06);overflow:hidden"></div>
<div style="position:absolute;left:2590.91px;top:548.65px;font-size:32.174px;line-height:1;font-weight:400;color:#101828;white-space:pre;transform:scaleX(1.0442);transform-origin:0 0;-webkit-text-stroke:1.2px currentColor;">Message preview</div>
<div style="position:absolute;left:2559px;top:608px;width:716px;height:273px;background:#e6ddd5;border-radius:0 0 14px 14px;overflow:hidden"></div>
<svg style="position:absolute;left:2559px;top:608px;border-radius:0 0 14px 14px" width="716" height="273" viewBox="0 0 716 273"><circle cx="323.9" cy="152.8" r="5.3" fill="none" stroke="#d7cec6" stroke-width="1.5"/><circle cx="333.4" cy="138.6" r="4.3" fill="none" stroke="#d7cec6" stroke-width="1.5"/><circle cx="132.2" cy="139.8" r="4.4" fill="none" stroke="#d7cec6" stroke-width="1.5"/><circle cx="567.8" cy="25.7" r="3.4" fill="none" stroke="#d7cec6" stroke-width="1.5"/><circle cx="64.9" cy="221.0" r="4.6" fill="none" stroke="#d7cec6" stroke-width="1.5"/><circle cx="30.0" cy="268.1" r="5.4" fill="none" stroke="#d7cec6" stroke-width="1.5"/><circle cx="468.2" cy="168.0" r="3.0" fill="none" stroke="#d7cec6" stroke-width="1.5"/><circle cx="10.7" cy="144.2" r="2.7" fill="none" stroke="#d7cec6" stroke-width="1.5"/><circle cx="136.2" cy="66.1" r="2.6" fill="none" stroke="#d7cec6" stroke-width="1.5"/><circle cx="332.2" cy="120.3" r="5.0" fill="none" stroke="#d7cec6" stroke-width="1.5"/><circle cx="371.7" cy="174.8" r="4.0" fill="none" stroke="#d7cec6" stroke-width="1.5"/><circle cx="474.3" cy="124.9" r="3.3" fill="none" stroke="#d7cec6" stroke-width="1.5"/><circle cx="714.3" cy="271.8" r="5.0" fill="none" stroke="#d7cec6" stroke-width="1.5"/><circle cx="506.8" cy="86.1" r="3.2" fill="none" stroke="#d7cec6" stroke-width="1.5"/><circle cx="207.0" cy="19.2" r="4.8" fill="none" stroke="#d7cec6" stroke-width="1.5"/><circle cx="286.7" cy="231.1" r="3.7" fill="none" stroke="#d7cec6" stroke-width="1.5"/><circle cx="686.0" cy="231.3" r="2.5" fill="none" stroke="#d7cec6" stroke-width="1.5"/><circle cx="150.2" cy="248.5" r="3.9" fill="none" stroke="#d7cec6" stroke-width="1.5"/><circle cx="701.9" cy="108.5" r="2.7" fill="none" stroke="#d7cec6" stroke-width="1.5"/><circle cx="450.7" cy="212.5" r="3.3" fill="none" stroke="#d7cec6" stroke-width="1.5"/><circle cx="62.4" cy="90.8" r="5.4" fill="none" stroke="#d7cec6" stroke-width="1.5"/><circle cx="542.8" cy="32.2" r="3.2" fill="none" stroke="#d7cec6" stroke-width="1.5"/><circle cx="72.3" cy="16.4" r="4.9" fill="none" stroke="#d7cec6" stroke-width="1.5"/><circle cx="127.2" cy="152.7" r="3.8" fill="none" stroke="#d7cec6" stroke-width="1.5"/><circle cx="136.5" cy="199.8" r="2.9" fill="none" stroke="#d7cec6" stroke-width="1.5"/><circle cx="460.9" cy="31.8" r="3.8" fill="none" stroke="#d7cec6" stroke-width="1.5"/><circle cx="152.4" cy="73.7" r="5.4" fill="none" stroke="#d7cec6" stroke-width="1.5"/><circle cx="575.2" cy="83.0" r="5.2" fill="none" stroke="#d7cec6" stroke-width="1.5"/><circle cx="150.9" cy="107.6" r="5.1" fill="none" stroke="#d7cec6" stroke-width="1.5"/><circle cx="459.6" cy="27.4" r="5.5" fill="none" stroke="#d7cec6" stroke-width="1.5"/><circle cx="152.7" cy="70.5" r="4.8" fill="none" stroke="#d7cec6" stroke-width="1.5"/><circle cx="235.5" cy="80.9" r="2.7" fill="none" stroke="#d7cec6" stroke-width="1.5"/><circle cx="64.5" cy="159.1" r="3.2" fill="none" stroke="#d7cec6" stroke-width="1.5"/><circle cx="430.5" cy="101.5" r="3.9" fill="none" stroke="#d7cec6" stroke-width="1.5"/><circle cx="686.7" cy="132.1" r="4.2" fill="none" stroke="#d7cec6" stroke-width="1.5"/><circle cx="620.4" cy="49.9" r="3.0" fill="none" stroke="#d7cec6" stroke-width="1.5"/><circle cx="650.4" cy="223.3" r="3.2" fill="none" stroke="#d7cec6" stroke-width="1.5"/><circle cx="135.9" cy="201.9" r="5.3" fill="none" stroke="#d7cec6" stroke-width="1.5"/><circle cx="140.8" cy="259.4" r="5.1" fill="none" stroke="#d7cec6" stroke-width="1.5"/><circle cx="432.1" cy="115.1" r="2.8" fill="none" stroke="#d7cec6" stroke-width="1.5"/><circle cx="27.7" cy="262.8" r="3.2" fill="none" stroke="#d7cec6" stroke-width="1.5"/><circle cx="504.5" cy="70.2" r="5.0" fill="none" stroke="#d7cec6" stroke-width="1.5"/><circle cx="427.1" cy="80.1" r="3.0" fill="none" stroke="#d7cec6" stroke-width="1.5"/><circle cx="515.8" cy="18.8" r="3.2" fill="none" stroke="#d7cec6" stroke-width="1.5"/><circle cx="400.5" cy="232.7" r="4.3" fill="none" stroke="#d7cec6" stroke-width="1.5"/><circle cx="200.6" cy="250.4" r="3.1" fill="none" stroke="#d7cec6" stroke-width="1.5"/><circle cx="11.9" cy="73.5" r="3.8" fill="none" stroke="#d7cec6" stroke-width="1.5"/><circle cx="43.3" cy="48.1" r="3.6" fill="none" stroke="#d7cec6" stroke-width="1.5"/><circle cx="409.7" cy="35.9" r="3.6" fill="none" stroke="#d7cec6" stroke-width="1.5"/><circle cx="637.9" cy="267.7" r="4.5" fill="none" stroke="#d7cec6" stroke-width="1.5"/><circle cx="494.9" cy="159.6" r="2.9" fill="none" stroke="#d7cec6" stroke-width="1.5"/><circle cx="25.1" cy="4.9" r="5.2" fill="none" stroke="#d7cec6" stroke-width="1.5"/><circle cx="501.9" cy="262.8" r="2.6" fill="none" stroke="#d7cec6" stroke-width="1.5"/><circle cx="455.5" cy="131.7" r="4.7" fill="none" stroke="#d7cec6" stroke-width="1.5"/><circle cx="228.3" cy="272.8" r="2.7" fill="none" stroke="#d7cec6" stroke-width="1.5"/><circle cx="391.0" cy="201.2" r="5.2" fill="none" stroke="#d7cec6" stroke-width="1.5"/><circle cx="527.8" cy="192.1" r="4.9" fill="none" stroke="#d7cec6" stroke-width="1.5"/><circle cx="655.1" cy="96.1" r="4.6" fill="none" stroke="#d7cec6" stroke-width="1.5"/><circle cx="645.0" cy="237.8" r="3.8" fill="none" stroke="#d7cec6" stroke-width="1.5"/><circle cx="566.0" cy="235.7" r="4.2" fill="none" stroke="#d7cec6" stroke-width="1.5"/><circle cx="447.5" cy="104.4" r="4.2" fill="none" stroke="#d7cec6" stroke-width="1.5"/><circle cx="435.9" cy="21.9" r="4.4" fill="none" stroke="#d7cec6" stroke-width="1.5"/><circle cx="711.2" cy="240.2" r="4.7" fill="none" stroke="#d7cec6" stroke-width="1.5"/><circle cx="278.1" cy="200.7" r="4.2" fill="none" stroke="#d7cec6" stroke-width="1.5"/><circle cx="315.4" cy="228.9" r="2.8" fill="none" stroke="#d7cec6" stroke-width="1.5"/><circle cx="537.2" cy="8.1" r="4.3" fill="none" stroke="#d7cec6" stroke-width="1.5"/><circle cx="344.4" cy="62.9" r="4.6" fill="none" stroke="#d7cec6" stroke-width="1.5"/><circle cx="356.0" cy="167.8" r="5.3" fill="none" stroke="#d7cec6" stroke-width="1.5"/><circle cx="183.2" cy="3.1" r="3.4" fill="none" stroke="#d7cec6" stroke-width="1.5"/><circle cx="485.5" cy="55.3" r="3.0" fill="none" stroke="#d7cec6" stroke-width="1.5"/><path d="M653.1 169.5 L653.9 178.0 L659.2 184.8 L650.7 185.6 L643.9 190.9 L643.1 182.3 L637.8 175.6 L646.3 174.8Z" fill="none" stroke="#d7cec6" stroke-width="1.5" stroke-linejoin="round"/><path d="M184.6 160.3 L183.9 171.2 L192.2 178.3 L181.3 177.6 L174.2 185.9 L175.0 175.0 L166.6 167.9 L177.5 168.7Z" fill="none" stroke="#d7cec6" stroke-width="1.5" stroke-linejoin="round"/><path d="M424.8 79.8 L422.4 85.9 L426.0 91.3 L419.5 90.9 L415.5 96.0 L413.9 89.7 L407.7 87.4 L413.3 83.9 L413.5 77.4 L418.5 81.6Z" fill="none" stroke="#d7cec6" stroke-width="1.5" stroke-linejoin="round"/><path d="M609.3 179.6 L611.2 190.4 L622.1 191.2 L612.4 196.3 L614.9 207.0 L607.1 199.3 L597.8 205.0 L602.6 195.2 L594.3 188.1 L605.1 189.7Z" fill="none" stroke="#d7cec6" stroke-width="1.5" stroke-linejoin="round"/><path d="M346.2 241.8 L344.2 250.9 L350.6 257.6 L341.3 258.6 L336.9 266.7 L333.1 258.2 L324.0 256.5 L330.9 250.3 L329.8 241.1 L337.8 245.7Z" fill="none" stroke="#d7cec6" stroke-width="1.5" stroke-linejoin="round"/><path d="M522.3 221.2 L517.3 229.3 L524.0 236.1 L514.7 233.9 L510.3 242.3 L509.6 232.9 L500.2 231.3 L509.0 227.6 L507.6 218.2 L513.7 225.5Z" fill="none" stroke="#d7cec6" stroke-width="1.5" stroke-linejoin="round"/><path d="M203.1 153.4 L204.4 162.0 L212.2 165.8 L204.4 169.7 L203.2 178.3 L197.1 172.1 L188.6 173.6 L192.6 165.9 L188.5 158.2 L197.1 159.7Z" fill="none" stroke="#d7cec6" stroke-width="1.5" stroke-linejoin="round"/><path d="M567.0 -4.6 L568.8 2.5 L576.1 2.4 L570.0 6.4 L572.3 13.3 L566.6 8.7 L560.8 13.0 L563.4 6.2 L557.5 2.0 L564.8 2.4Z" fill="none" stroke="#d7cec6" stroke-width="1.5" stroke-linejoin="round"/><path d="M598.3 55.9 L597.3 63.7 L602.9 69.1 L595.2 68.1 L589.8 73.7 L590.8 66.0 L585.2 60.6 L592.9 61.6Z" fill="none" stroke="#d7cec6" stroke-width="1.5" stroke-linejoin="round"/><path d="M453.8 165.3 L455.1 176.1 L464.6 181.6 L453.7 182.9 L448.3 192.4 L447.0 181.5 L437.5 176.1 L448.4 174.8Z" fill="none" stroke="#d7cec6" stroke-width="1.5" stroke-linejoin="round"/><path d="M341.8 39.9 L342.5 46.6 L349.2 47.6 L343.0 50.3 L344.1 56.9 L339.6 51.9 L333.7 55.0 L337.1 49.2 L332.2 44.5 L338.8 45.9Z" fill="none" stroke="#d7cec6" stroke-width="1.5" stroke-linejoin="round"/><path d="M204.9 85.7 L201.6 94.8 L203.7 104.3 L194.6 101.0 L185.1 103.1 L188.4 94.0 L186.3 84.5 L195.4 87.8Z" fill="none" stroke="#d7cec6" stroke-width="1.5" stroke-linejoin="round"/><path d="M506.0 50.8 L504.6 59.2 L512.4 62.7 L503.9 63.9 L503.1 72.4 L499.3 64.7 L490.9 66.5 L497.1 60.6 L492.8 53.2 L500.3 57.2Z" fill="none" stroke="#d7cec6" stroke-width="1.5" stroke-linejoin="round"/><path d="M143.9 233.7 L144.7 239.6 L150.0 242.4 L144.6 244.9 L143.7 250.9 L139.5 246.5 L133.6 247.5 L136.4 242.2 L133.7 236.8 L139.6 237.9Z" fill="none" stroke="#d7cec6" stroke-width="1.5" stroke-linejoin="round"/><rect x="-25.7" y="-18.0" width="51.4" height="36.0" rx="8" fill="none" stroke="#d7cec6" stroke-width="1.5" transform="translate(703.4 27.0) rotate(34)"/><rect x="-19.3" y="-10.9" width="38.5" height="21.8" rx="8" fill="none" stroke="#d7cec6" stroke-width="1.5" transform="translate(88.4 66.1) rotate(-15)"/><rect x="-17.5" y="-17.2" width="35.1" height="34.4" rx="8" fill="none" stroke="#d7cec6" stroke-width="1.5" transform="translate(699.4 254.5) rotate(-39)"/><rect x="-18.6" y="-14.2" width="37.2" height="28.4" rx="8" fill="none" stroke="#d7cec6" stroke-width="1.5" transform="translate(361.4 10.1) rotate(-18)"/><rect x="-25.7" y="-14.3" width="51.4" height="28.6" rx="8" fill="none" stroke="#d7cec6" stroke-width="1.5" transform="translate(658.5 59.6) rotate(-37)"/><rect x="-26.4" y="-14.7" width="52.7" height="29.4" rx="8" fill="none" stroke="#d7cec6" stroke-width="1.5" transform="translate(381.7 187.4) rotate(40)"/><rect x="-23.2" y="-14.4" width="46.3" height="28.8" rx="8" fill="none" stroke="#d7cec6" stroke-width="1.5" transform="translate(644.8 141.5) rotate(30)"/><rect x="-24.2" y="-14.4" width="48.5" height="28.8" rx="8" fill="none" stroke="#d7cec6" stroke-width="1.5" transform="translate(414.5 188.1) rotate(5)"/><rect x="-16.2" y="-15.1" width="32.4" height="30.3" rx="8" fill="none" stroke="#d7cec6" stroke-width="1.5" transform="translate(595.1 153.3) rotate(33)"/><rect x="-26.9" y="-18.7" width="53.8" height="37.4" rx="8" fill="none" stroke="#d7cec6" stroke-width="1.5" transform="translate(183.7 183.3) rotate(9)"/><rect x="-21.4" y="-12.7" width="42.7" height="25.5" rx="8" fill="none" stroke="#d7cec6" stroke-width="1.5" transform="translate(218.0 38.5) rotate(-0)"/><rect x="-14.1" y="-13.8" width="28.1" height="27.5" rx="8" fill="none" stroke="#d7cec6" stroke-width="1.5" transform="translate(294.3 31.2) rotate(3)"/><rect x="-21.3" y="-19.9" width="42.7" height="39.8" rx="8" fill="none" stroke="#d7cec6" stroke-width="1.5" transform="translate(31.5 250.4) rotate(-30)"/><rect x="-26.6" y="-14.6" width="53.1" height="29.2" rx="8" fill="none" stroke="#d7cec6" stroke-width="1.5" transform="translate(66.7 45.5) rotate(34)"/><rect x="-17.3" y="-14.9" width="34.6" height="29.9" rx="8" fill="none" stroke="#d7cec6" stroke-width="1.5" transform="translate(573.1 110.3) rotate(-13)"/><rect x="-26.4" y="-15.2" width="52.8" height="30.5" rx="8" fill="none" stroke="#d7cec6" stroke-width="1.5" transform="translate(645.0 255.4) rotate(-31)"/><ellipse cx="0" cy="0" rx="28.0" ry="25.2" fill="none" stroke="#d7cec6" stroke-width="1.5" transform="translate(300.4 8.0) rotate(38)"/><ellipse cx="0" cy="0" rx="22.3" ry="18.5" fill="none" stroke="#d7cec6" stroke-width="1.5" transform="translate(25.5 42.5) rotate(18)"/><ellipse cx="0" cy="0" rx="33.5" ry="23.3" fill="none" stroke="#d7cec6" stroke-width="1.5" transform="translate(175.0 136.2) rotate(28)"/><ellipse cx="0" cy="0" rx="38.1" ry="28.1" fill="none" stroke="#d7cec6" stroke-width="1.5" transform="translate(446.4 195.9) rotate(-38)"/><ellipse cx="0" cy="0" rx="36.2" ry="22.6" fill="none" stroke="#d7cec6" stroke-width="1.5" transform="translate(453.2 225.3) rotate(29)"/><ellipse cx="0" cy="0" rx="27.0" ry="22.7" fill="none" stroke="#d7cec6" stroke-width="1.5" transform="translate(382.3 59.6) rotate(7)"/><ellipse cx="0" cy="0" rx="36.4" ry="19.6" fill="none" stroke="#d7cec6" stroke-width="1.5" transform="translate(97.7 249.7) rotate(-26)"/><ellipse cx="0" cy="0" rx="26.5" ry="26.5" fill="none" stroke="#d7cec6" stroke-width="1.5" transform="translate(431.8 243.1) rotate(-24)"/><ellipse cx="0" cy="0" rx="25.0" ry="15.4" fill="none" stroke="#d7cec6" stroke-width="1.5" transform="translate(69.4 242.7) rotate(-9)"/><ellipse cx="0" cy="0" rx="34.5" ry="25.3" fill="none" stroke="#d7cec6" stroke-width="1.5" transform="translate(311.3 256.9) rotate(-24)"/><ellipse cx="0" cy="0" rx="24.2" ry="23.1" fill="none" stroke="#d7cec6" stroke-width="1.5" transform="translate(449.6 218.1) rotate(-11)"/><ellipse cx="0" cy="0" rx="38.2" ry="24.2" fill="none" stroke="#d7cec6" stroke-width="1.5" transform="translate(587.8 98.6) rotate(-13)"/></svg>
<svg style="position:absolute;left:2640px;top:672px;" width="540" height="146" viewBox="0 0 540 146"><path d="M2 0H524a16 16 0 0 1 16 16V128a16 16 0 0 1-16 16H32a16 16 0 0 1-16-16V22Z" fill="#fff" style="filter:drop-shadow(-2px 2px 6px rgba(0,0,0,.12))"/></svg>
<div style="position:absolute;left:3034.76px;top:746.59px;font-size:27.536px;line-height:1;font-weight:400;color:#667085;white-space:pre;transform:scaleX(0.9211);transform-origin:0 0;">11:48 am</div>
<div style="position:absolute;left:840px;top:498px;width:608px;height:1024px;background:#fff;box-shadow:0 12px 40px rgba(16,24,40,.16),0 4px 8px rgba(16,24,40,.06)"></div>
<div style="position:absolute;left:840px;top:498px;width:608px;height:1024px;background:#fff;border:2px solid #e3e4ea;box-sizing:border-box;border-radius:14px"></div>
<div style="position:absolute;left:858.6px;top:524px;width:570.9px;height:55px;background:#fff;border:2px solid #dadbe3;box-sizing:border-box;border-radius:12px"></div>
<svg style="position:absolute;left:876px;top:530px;" width="44" height="44" viewBox="0 0 44 44"><circle cx="20.3" cy="19.9" r="13.5" fill="none" stroke="#475467" stroke-width="3.4"/><path d="M30 29.5l7.5 7.5" stroke="#475467" stroke-width="3.4" stroke-linecap="butt"/></svg>
<div style="position:absolute;left:926.85px;top:537.07px;font-size:29.565px;line-height:1;font-weight:400;color:#667085;white-space:pre;transform:scaleX(0.9516);transform-origin:0 0;">Search</div>
<svg style="position:absolute;left:862px;top:612px;" width="32" height="32" viewBox="0 0 32 32"><path d="M28.5 16H4M14.5 4L3.5 16l11 12" fill="none" stroke="#2151f0" stroke-width="3.2" stroke-linecap="round" stroke-linejoin="round"/></svg>
<div style="position:absolute;left:914.37px;top:613.51px;font-size:28.696px;line-height:1;font-weight:400;color:#344054;white-space:pre;transform:scaleX(1.0283);transform-origin:0 0;-webkit-text-stroke:0.5px currentColor;">Service Booking</div>
<div style="position:absolute;left:840.5px;top:672px;width:600.5px;height:2px;background:#eaecf0"></div>
<div style="position:absolute;left:844px;top:1064px;width:599px;height:73px;background:#f2f4f7;border-radius:10px"></div>
<div style="position:absolute;left:859.20px;top:707.01px;font-size:28.696px;line-height:1;font-weight:400;color:#344054;white-space:pre;">End Date Time</div>
<div style="position:absolute;left:859.23px;top:782.94px;font-size:28.696px;line-height:1;font-weight:400;color:#344054;white-space:pre;transform:scaleX(0.9863);transform-origin:0 0;">End Date</div>
<div style="position:absolute;left:859.19px;top:858.87px;font-size:28.696px;line-height:1;font-weight:400;color:#344054;white-space:pre;transform:scaleX(1.0034);transform-origin:0 0;">End Time</div>
<div style="position:absolute;left:859.19px;top:934.80px;font-size:28.696px;line-height:1;font-weight:400;color:#344054;white-space:pre;transform:scaleX(1.0039);transform-origin:0 0;">Day of the week</div>
<div style="position:absolute;left:859.09px;top:1010.73px;font-size:28.696px;line-height:1;font-weight:400;color:#344054;white-space:pre;transform:scaleX(1.0526);transform-origin:0 0;">Month</div>
<div style="position:absolute;left:859.16px;top:1086.66px;font-size:28.696px;line-height:1;font-weight:400;color:#344054;white-space:pre;transform:scaleX(1.0197);transform-origin:0 0;">Name of Month</div>
<div style="position:absolute;left:860.19px;top:1162.59px;font-size:28.696px;line-height:1;font-weight:400;color:#344054;white-space:pre;transform:scaleX(1.0081);transform-origin:0 0;">Timezone</div>
<div style="position:absolute;left:860.20px;top:1238.52px;font-size:28.696px;line-height:1;font-weight:400;color:#344054;white-space:pre;">Cancellation Link</div>
<div style="position:absolute;left:859.21px;top:1314.45px;font-size:28.696px;line-height:1;font-weight:400;color:#344054;white-space:pre;transform:scaleX(0.9943);transform-origin:0 0;">Reschedule Link</div>
<div style="position:absolute;left:859.15px;top:1390.38px;font-size:28.696px;line-height:1;font-weight:400;color:#344054;white-space:pre;transform:scaleX(1.0270);transform-origin:0 0;">Meeting Location</div>
<div style="position:absolute;left:859.14px;top:1466.31px;font-size:28.696px;line-height:1;font-weight:400;color:#344054;white-space:pre;transform:scaleX(1.0292);transform-origin:0 0;">Notes</div>
<svg style="position:absolute;left:0px;top:1882px;" width="16" height="16" viewBox="0 0 16 16"><path d="M0 0 A16 16 0 0 0 16 16 H0 Z" fill="#15243a"/><path d="M0 0 A16 16 0 0 0 16 16" fill="none" stroke="#6a7080" stroke-width="1.2"/></svg>
</body></html>
